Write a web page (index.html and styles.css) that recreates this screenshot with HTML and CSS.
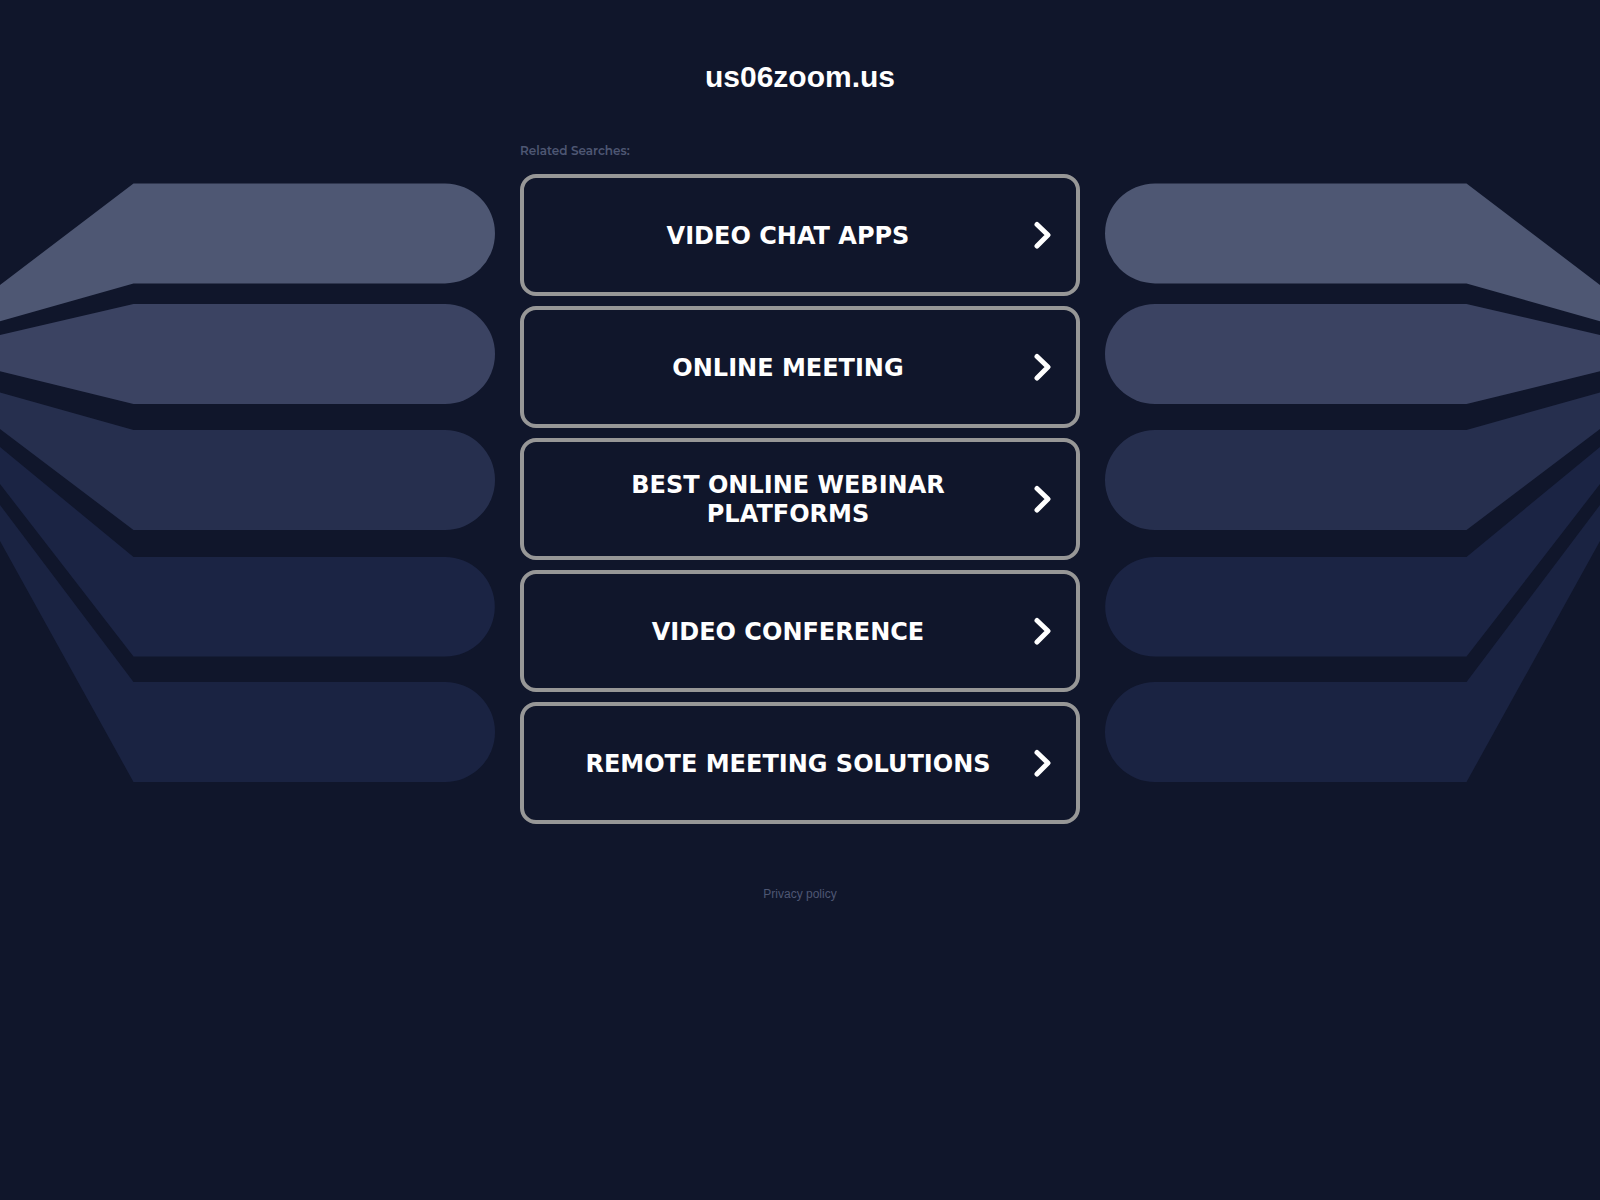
FILE: index.html
```html
<!DOCTYPE html>
<html lang="en">
  <head>
    <meta charset="UTF-8" />
    <meta name="viewport" content="width=device-width, initial-scale=1.0" />
    <title>us06zoom.us</title>
    <link rel="stylesheet" href="styles.css">
  </head>
  <body>
    <svg class="sprite" aria-hidden="true">
      <symbol id="arms" viewBox="0 0 495 600">
        <path fill="#4e5773" d="M0 102L133.5 .4H445A50 50 0 0 1 445 100.4H133.5L0 138.3Z" />
        <path fill="#3b4362" d="M0 152L133.5 121H445A50 50 0 0 1 445 221H133.5L0 188.3Z" />
        <path fill="#262f4e" d="M0 209.5L133.5 247H445A50 50 0 0 1 445 347H133.5L0 246Z" />
        <path fill="#1b2444" d="M0 264L133.5 374H445A49.8 49.8 0 0 1 445 473.6H133.5L0 301Z" />
        <path fill="#1a2342" d="M0 322L133.5 499H445A50 50 0 0 1 445 599H133.5L0 358Z" />
      </symbol>
      <symbol id="chevron" viewBox="0 0 18 28">
        <path d="M3 3.5L14 14L3 25" fill="none" stroke="#fff" stroke-width="5" stroke-linecap="round" stroke-linejoin="round" />
      </symbol>
    </svg>

    <header class="header">
      <h1 class="domain">us06zoom.us</h1>
    </header>

    <main class="content">
      <svg class="arms"><use href="#arms" /></svg>

      <section class="searches">
        <h2 class="searches-title">Related Searches:</h2>
        <ul class="search-list">
          <li>
            <a class="search-link" href="#">
              <span class="search-text">Video Chat Apps</span>
              <svg class="chevron"><use href="#chevron" /></svg>
            </a>
          </li>
          <li>
            <a class="search-link" href="#">
              <span class="search-text">Online Meeting</span>
              <svg class="chevron"><use href="#chevron" /></svg>
            </a>
          </li>
          <li>
            <a class="search-link" href="#">
              <span class="search-text">Best Online Webinar Platforms</span>
              <svg class="chevron"><use href="#chevron" /></svg>
            </a>
          </li>
          <li>
            <a class="search-link" href="#">
              <span class="search-text">Video Conference</span>
              <svg class="chevron"><use href="#chevron" /></svg>
            </a>
          </li>
          <li>
            <a class="search-link" href="#">
              <span class="search-text">Remote Meeting Solutions</span>
              <svg class="chevron"><use href="#chevron" /></svg>
            </a>
          </li>
        </ul>
      </section>

      <svg class="arms arms-right"><use href="#arms" /></svg>
    </main>

    <footer class="footer">
      <a class="privacy" href="#">Privacy policy</a>
    </footer>
  </body>
</html>
```

FILE: styles.css
```css
* {
  box-sizing: border-box;
}

body {
  margin: 0;
  background: #10162b;
  color: #fff;
  font-family: Arial, "Liberation Sans", sans-serif;
  overflow-x: hidden;
}

.sprite {
  display: none;
}

.header {
  padding: 60px 16px 0;
  text-align: center;
}

.domain {
  margin: 0;
  font-size: 30px;
  line-height: 34px;
}

.content {
  display: grid;
  grid-template-columns: minmax(0, 1fr) minmax(0, 560px) minmax(0, 1fr);
  column-gap: 25px;
  padding-top: 48px;
}

/* striped arms on both sides of the list */
.arms {
  justify-self: end;
  width: 495px;
  height: 600px;
  margin-top: 41px;
}

.arms-right {
  justify-self: start;
  transform: scaleX(-1);
}

.searches-title {
  margin: 0 0 14px;
  color: #4e5773;
  font-family: Montserrat, "Open Sans", sans-serif;
  font-size: 12px;
  font-weight: 600;
  line-height: 18px;
}

.search-list {
  display: flex;
  flex-direction: column;
  gap: 10px;
  margin: 0;
  padding: 0;
  list-style: none;
}

.search-link {
  display: flex;
  align-items: center;
  gap: 24px;
  min-height: 122px;
  padding: 0 24px 0 42px;
  border: 4px solid #979797;
  border-radius: 16px;
  color: #fff;
  text-decoration: none;
}

.search-link:hover {
  border-color: #fff;
}

.search-text {
  flex: 1;
  padding-top: 2px;
  font-family: Verdana, "DejaVu Sans", sans-serif;
  font-size: 24px;
  font-weight: 700;
  line-height: 29px;
  text-align: center;
  text-transform: uppercase;
}

.chevron {
  flex: none;
  width: 18px;
  height: 28px;
}

.footer {
  padding: 60px 16px 40px;
  text-align: center;
}

.privacy {
  color: #4e5773;
  font-size: 12px;
  line-height: 16px;
  text-decoration: none;
}

@media (max-width: 900px) {
  .content {
    grid-template-columns: minmax(0, 560px);
    justify-content: center;
    padding: 48px 16px 0;
  }

  .arms {
    display: none;
  }
}
```
